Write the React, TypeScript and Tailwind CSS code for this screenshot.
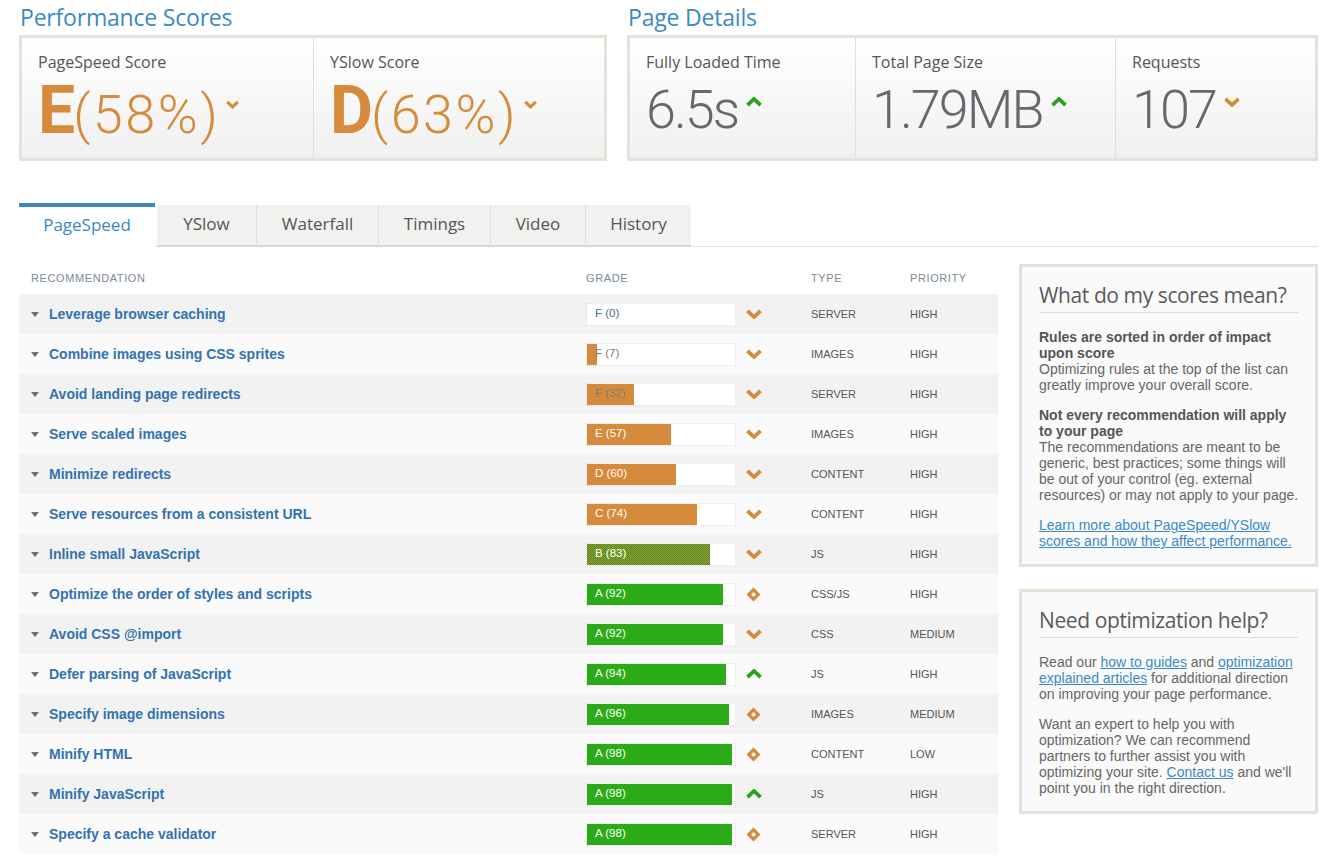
import React from "react";

type Row = {
  name: string;
  grade: string;
  score: number;
  icon: "down" | "up" | "diamond";
  type: string;
  pri: string;
};

const rows: Row[] = [
  { name: "Leverage browser caching", grade: "F", score: 0, icon: "down", type: "SERVER", pri: "HIGH" },
  { name: "Combine images using CSS sprites", grade: "F", score: 7, icon: "down", type: "IMAGES", pri: "HIGH" },
  { name: "Avoid landing page redirects", grade: "F", score: 32, icon: "down", type: "SERVER", pri: "HIGH" },
  { name: "Serve scaled images", grade: "E", score: 57, icon: "down", type: "IMAGES", pri: "HIGH" },
  { name: "Minimize redirects", grade: "D", score: 60, icon: "down", type: "CONTENT", pri: "HIGH" },
  { name: "Serve resources from a consistent URL", grade: "C", score: 74, icon: "down", type: "CONTENT", pri: "HIGH" },
  { name: "Inline small JavaScript", grade: "B", score: 83, icon: "down", type: "JS", pri: "HIGH" },
  { name: "Optimize the order of styles and scripts", grade: "A", score: 92, icon: "diamond", type: "CSS/JS", pri: "HIGH" },
  { name: "Avoid CSS @import", grade: "A", score: 92, icon: "down", type: "CSS", pri: "MEDIUM" },
  { name: "Defer parsing of JavaScript", grade: "A", score: 94, icon: "up", type: "JS", pri: "HIGH" },
  { name: "Specify image dimensions", grade: "A", score: 96, icon: "diamond", type: "IMAGES", pri: "MEDIUM" },
  { name: "Minify HTML", grade: "A", score: 98, icon: "diamond", type: "CONTENT", pri: "LOW" },
  { name: "Minify JavaScript", grade: "A", score: 98, icon: "up", type: "JS", pri: "HIGH" },
  { name: "Specify a cache validator", grade: "A", score: 98, icon: "diamond", type: "SERVER", pri: "HIGH" },
];

function ChevDown({ w = 16, h = 10 }: { w?: number; h?: number }) {
  return (
    <svg width={w} height={h} viewBox="0 0 16 10" className="block">
      <path d="M1.5 1.8 L8 8 L14.5 1.8" fill="none" stroke="#d68a3c" strokeWidth="3.8" />
    </svg>
  );
}

function ChevUp({ w = 16, h = 10 }: { w?: number; h?: number }) {
  return (
    <svg width={w} height={h} viewBox="0 0 16 10" className="block">
      <path d="M1.5 8.2 L8 2 L14.5 8.2" fill="none" stroke="#2aa31c" strokeWidth="3.8" />
    </svg>
  );
}

function Diamond() {
  return (
    <svg width="15" height="15" viewBox="0 0 15 15" className="block">
      <polygon points="7.5,0.5 14.5,7.5 7.5,14.5 0.5,7.5" fill="#d68a3c" />
      <circle cx="7.5" cy="7.5" r="2" fill="#ffffff" />
    </svg>
  );
}

function Triangle() {
  return (
    <svg width="8" height="5" viewBox="0 0 8 5" className="block">
      <polygon points="0,0 8,0 4,5" fill="#6e6e6e" />
    </svg>
  );
}

function GradeBar({ r }: { r: Row }) {
  const fillClass =
    r.grade === "A"
      ? "bg-[#2bab18]"
      : r.grade === "B"
      ? "bg-[#5f9a22] bg-[image:repeating-conic-gradient(#2b9f18_0_25%,#b98a3a_0_50%)] bg-[length:2px_2px]"
      : "bg-[#d68a3c]";
  const textClass =
    r.score === 0 ? "text-[#3f6e9c]" : r.score < 40 ? "text-[#7a7a7a]" : "text-white";
  return (
    <div className="relative w-[150px] h-[23px] border border-dotted border-[#dcdcdc] bg-white">
      <div className={`h-full ${fillClass}`} style={{ width: `${r.score}%` }} />
      <div className={`absolute inset-y-0 left-[8px] flex items-center text-[11.5px] ${textClass}`}>
        {r.grade} ({r.score})
      </div>
    </div>
  );
}

function ScoreCell({
  label,
  letter,
  pct,
  border,
  width,
}: {
  label: string;
  letter: string;
  pct: string;
  border?: boolean;
  width: string;
}) {
  return (
    <div className={`${width} h-full pl-[16px] pt-[14px] ${border ? "border-l border-[#e2ded6]" : ""}`}>
      <div className="text-[16px] leading-[20px] text-[#555] font-['Open_Sans',sans-serif]">{label}</div>
      <div className="flex items-start mt-[12px]">
        <span className="text-[54px] leading-[54px] font-light text-[#d68a3c] font-['Roboto',sans-serif] tracking-[2.5px]">
          <span className="text-[66px] font-bold tracking-[-2px]">{letter}</span>
          {pct}
        </span>
        <span className="mt-[16px] ml-[6px]">
          <ChevDown w={13} h={9} />
        </span>
      </div>
    </div>
  );
}

function DetailCell({
  label,
  value,
  up,
  border,
  width,
}: {
  label: string;
  value: string;
  up: boolean;
  border?: boolean;
  width: string;
}) {
  return (
    <div className={`${width} h-full pl-[16px] pt-[14px] ${border ? "border-l border-[#e2ded6]" : ""}`}>
      <div className="text-[16px] leading-[20px] text-[#555] font-['Open_Sans',sans-serif]">{label}</div>
      <div className="flex items-start mt-[11px]">
        <span className="text-[54px] leading-[54px] font-light text-[#69676e] font-['Roboto',sans-serif] tracking-[-2px]">
          {value}
        </span>
        <span className="mt-[14px] ml-[8px]">{up ? <ChevUp /> : <ChevDown />}</span>
      </div>
    </div>
  );
}

const tabs = [
  { t: "YSlow", w: "w-[99px]" },
  { t: "Waterfall", w: "w-[122px]" },
  { t: "Timings", w: "w-[112px]" },
  { t: "Video", w: "w-[95px]" },
  { t: "History", w: "w-[106px]" },
];

function Link({ children }: { children: React.ReactNode }) {
  return <a className="text-[#3a8ac6] underline">{children}</a>;
}

export default function App() {
  return (
    <div className="w-[1334px] h-[856px] overflow-hidden bg-white font-['Liberation_Sans',Arial,sans-serif]">
      {/* Top summary */}
      <div className="flex gap-[20px] pl-[19px]">
        <section className="w-[588px]">
          <h2 className="h-[35px] leading-[34px] pl-[1px] text-[23px] tracking-[-0.2px] text-[#3a8ac6] font-['Open_Sans',sans-serif]">
            Performance Scores
          </h2>
          <div className="h-[126px] border-[3px] border-[#e7e2d9] bg-linear-to-b from-white to-[#f0f0f0] flex">
            <ScoreCell width="w-[291px]" label="PageSpeed Score" letter="E" pct="(58%)" />
            <ScoreCell width="flex-1" label="YSlow Score" letter="D" pct="(63%)" border />
          </div>
        </section>
        <section className="w-[691px]">
          <h2 className="h-[35px] leading-[34px] pl-[1px] text-[23px] tracking-[-0.2px] text-[#3a8ac6] font-['Open_Sans',sans-serif]">
            Page Details
          </h2>
          <div className="h-[126px] border-[3px] border-[#e7e2d9] bg-linear-to-b from-white to-[#f0f0f0] flex">
            <DetailCell width="w-[225px]" label="Fully Loaded Time" value="6.5s" up />
            <DetailCell width="w-[260px]" label="Total Page Size" value="1.79MB" up border />
            <DetailCell width="flex-1" label="Requests" value="107" up={false} border />
          </div>
        </section>
      </div>

      {/* Tabs */}
      <div className="mt-[42px] mr-[16px] ml-[19px] flex items-end h-[44px] font-['Open_Sans',sans-serif] text-[17px]">
        <div className="w-[136px] h-[44px] border-t-[4px] border-[#3a87c4] bg-white text-[#3a87c4] flex items-center justify-center pb-[4px]">
          PageSpeed
        </div>
        <div className="w-[2px] h-full border-b border-[#e3e3e3]" />
        {tabs.map((tab, i) => (
          <div
            key={tab.t}
            className={`${tab.w} h-[42px] bg-[#f1f1f0] border-b-[2px] border-b-[#ddd7cb] ${
              i > 0 ? "border-l border-l-[#e3ded5]" : ""
            } text-[#555] flex items-center justify-center pb-[2px]`}
          >
            {tab.t}
          </div>
        ))}
        <div className="flex-1 h-full border-b border-[#e3e3e3]" />
      </div>

      {/* Main */}
      <div className="flex pl-[19px] mt-[15px]">
        <div className="w-[979px]">
          <div className="h-[32px] flex items-center text-[11px] text-[#7b8a99] tracking-[0.6px]">
            <div className="w-[567px] pl-[12px]">RECOMMENDATION</div>
            <div className="w-[225px]">GRADE</div>
            <div className="w-[99px]">TYPE</div>
            <div className="flex-1">PRIORITY</div>
          </div>
          {rows.map((r, i) => (
            <div
              key={r.name + i}
              className={`h-[40px] flex items-center ${i % 2 === 0 ? "bg-[#f2f2f2]" : "bg-[#fafafa]"}`}
            >
              <div className="w-[567px] pl-[12px] flex items-center gap-[10px]">
                <Triangle />
                <span className="text-[14px] font-bold text-[#3273b0]">{r.name}</span>
              </div>
              <GradeBar r={r} />
              <div className="w-[75px] pl-[10px] flex items-center">
                {r.icon === "down" ? <ChevDown /> : r.icon === "up" ? <ChevUp /> : <Diamond />}
              </div>
              <div className="w-[99px] text-[11px] text-[#555]">{r.type}</div>
              <div className="flex-1 text-[11px] text-[#555]">{r.pri}</div>
            </div>
          ))}
        </div>

        <aside className="ml-[21px] w-[299px] mt-[2px]">
          <div className="border-[3px] border-[#e6e1d7] bg-[#fafafa] px-[17px] pt-[14px] pb-[15px]">
            <h3 className="text-[21px] tracking-[-0.4px] leading-[28px] pb-[3px] border-b border-[#dddddd] text-[#5a5a5a] font-['Open_Sans',sans-serif] whitespace-nowrap">
              What do my scores mean?
            </h3>
            <div className="text-[14px] leading-[16px] text-[#666] whitespace-nowrap">
              <p className="mt-[16px]">
                <b className="text-[#555]">
                  Rules are sorted in order of impact
                  <br />
                  upon score
                </b>
                <br />
                Optimizing rules at the top of the list can
                <br />
                greatly improve your overall score.
              </p>
              <p className="mt-[14px]">
                <b className="text-[#555]">
                  Not every recommendation will apply
                  <br />
                  to your page
                </b>
                <br />
                The recommendations are meant to be
                <br />
                generic, best practices; some things will
                <br />
                be out of your control (eg. external
                <br />
                resources) or may not apply to your page.
              </p>
              <p className="mt-[14px]">
                <Link>
                  Learn more about PageSpeed/YSlow
                  <br />
                  scores and how they affect performance.
                </Link>
              </p>
            </div>
          </div>

          <div className="mt-[22px] border-[3px] border-[#e6e1d7] bg-[#fafafa] px-[17px] pt-[14px] pb-[15px]">
            <h3 className="text-[21px] tracking-[-0.4px] leading-[28px] pb-[3px] border-b border-[#dddddd] text-[#5a5a5a] font-['Open_Sans',sans-serif] whitespace-nowrap">
              Need optimization help?
            </h3>
            <div className="text-[14px] leading-[16px] text-[#666] whitespace-nowrap">
              <p className="mt-[16px]">
                Read our <Link>how to guides</Link> and <Link>optimization</Link>
                <br />
                <Link>explained articles</Link> for additional direction
                <br />
                on improving your page performance.
              </p>
              <p className="mt-[14px]">
                Want an expert to help you with
                <br />
                optimization? We can recommend
                <br />
                partners to further assist you with
                <br />
                optimizing your site. <Link>Contact us</Link> and we'll
                <br />
                point you in the right direction.
              </p>
            </div>
          </div>
        </aside>
      </div>
    </div>
  );
}
